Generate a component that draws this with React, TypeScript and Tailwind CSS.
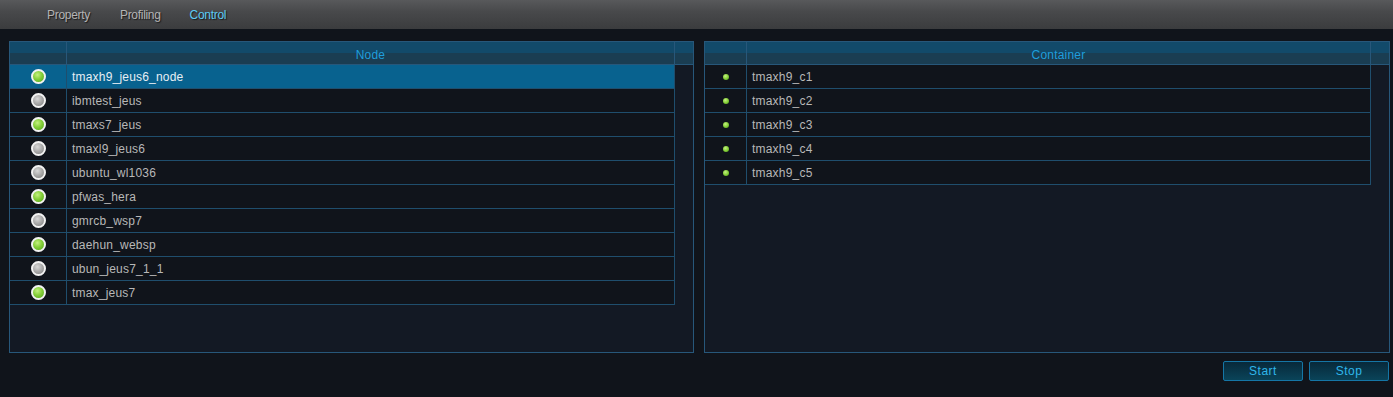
import React from "react";

const nodes = [
  { name: "tmaxh9_jeus6_node", on: true },
  { name: "ibmtest_jeus", on: false },
  { name: "tmaxs7_jeus", on: true },
  { name: "tmaxl9_jeus6", on: false },
  { name: "ubuntu_wl1036", on: false },
  { name: "pfwas_hera", on: true },
  { name: "gmrcb_wsp7", on: false },
  { name: "daehun_websp", on: true },
  { name: "ubun_jeus7_1_1", on: false },
  { name: "tmax_jeus7", on: true },
];

const containers = ["tmaxh9_c1", "tmaxh9_c2", "tmaxh9_c3", "tmaxh9_c4", "tmaxh9_c5"];

function Bulb({ on }: { on: boolean }) {
  return (
    <div
      className={
        "w-[15px] h-[15px] rounded-full border-2 border-[#f2f2f2] " +
        (on
          ? "bg-[radial-gradient(circle_at_40%_35%,#c4f080_0%,#86d03a_45%,#4fa018_100%)]"
          : "bg-[radial-gradient(circle_at_40%_35%,#d8d8d8_0%,#a8a8a8_50%,#7c7c7c_100%)]")
      }
    />
  );
}

function Dot() {
  return (
    <div className="w-[6px] h-[6px] rounded-full bg-[radial-gradient(circle_at_40%_35%,#c4f080_0%,#86d03a_50%,#4f9a18_100%)]" />
  );
}

function Panel({
  title,
  firstW,
  rows,
}: {
  title: string;
  firstW: string;
  rows: { icon: React.ReactNode; name: string; selected?: boolean }[];
}) {
  return (
    <div className="flex flex-col h-[312px] border border-[#27577a] bg-[#131924]">
      <div className="flex h-[23px] border-b border-[#27577a] bg-[linear-gradient(to_bottom,#124a6a_0%,#124a6a_50%,#1a3d52_50%,#1a3d52_100%)]">
        <div className={firstW + " shrink-0 border-r border-[#27577a]"} />
        <div className="flex-1 border-r border-[#27577a] flex items-center justify-center text-[12px] text-[#1e9edd] pt-[3px] tracking-[0.2px]">
          {title}
        </div>
        <div className="w-[18px] shrink-0" />
      </div>
      <div className="flex">
        <div className="flex-1 flex flex-col">
          {rows.map((r, i) => (
            <div
              key={i}
              className={
                "flex h-[24px] border-b border-r border-[#1f4e6d] " +
                (r.selected ? "bg-[#08628f]" : "bg-[#10141b]")
              }
            >
              <div className={firstW + " shrink-0 border-r border-[#1f4e6d] flex items-center justify-center"}>
                {r.icon}
              </div>
              <div
                className={
                  "flex-1 flex items-center pl-[5px] text-[12px] tracking-[0.2px] " +
                  (r.selected ? "text-[#e6eef4]" : "text-[#b8b8b8]")
                }
              >
                {r.name}
              </div>
            </div>
          ))}
        </div>
        <div className="w-[18px] shrink-0" />
      </div>
    </div>
  );
}

export default function App() {
  return (
    <div
      className="w-[1393px] h-[397px] bg-[#10141b] overflow-hidden"
      style={{ fontFamily: '"Liberation Sans", Arial, sans-serif' }}
    >
      <div className="h-[29px] bg-[linear-gradient(to_bottom,#58595b_0%,#48494b_40%,#3b3c3e_100%)] flex items-start pt-[6px] text-[12px]">
        <div className="w-[47px]" />
        <span className="text-[#b4b4b4] [text-shadow:1px_1px_1px_#1a1a1a] tracking-[-0.3px]">Property</span>
        <span className="ml-[30px] text-[#b4b4b4] [text-shadow:1px_1px_1px_#1a1a1a] tracking-[-0.3px]">Profiling</span>
        <span className="ml-[29px] text-[#5ccaf4] [text-shadow:1px_1px_1px_#1a1a1a] tracking-[-0.3px]">Control</span>
      </div>
      <div className="flex pl-[9px] pr-[3px] pt-[12px] gap-[10px]">
        <div className="w-[685px]">
          <Panel
            title="Node"
            firstW="w-[57px]"
            rows={nodes.map((n, i) => ({ icon: <Bulb on={n.on} />, name: n.name, selected: i === 0 }))}
          />
        </div>
        <div className="w-[686px]">
          <Panel
            title="Container"
            firstW="w-[42px]"
            rows={containers.map((c) => ({ icon: <Dot />, name: c }))}
          />
        </div>
      </div>
      <div className="flex justify-end gap-[6px] pr-[4px] pt-[8px]">
        <button className="w-[80px] h-[20px] rounded-[2px] border border-[#1576a6] bg-[linear-gradient(to_bottom,#08293a_0%,#0a4459_100%)] text-[12px] text-[#2fb6ea] tracking-[0.5px]">
          Start
        </button>
        <button className="w-[80px] h-[20px] rounded-[2px] border border-[#1576a6] bg-[linear-gradient(to_bottom,#08293a_0%,#0a4459_100%)] text-[12px] text-[#2fb6ea] tracking-[0.5px]">
          Stop
        </button>
      </div>
    </div>
  );
}
